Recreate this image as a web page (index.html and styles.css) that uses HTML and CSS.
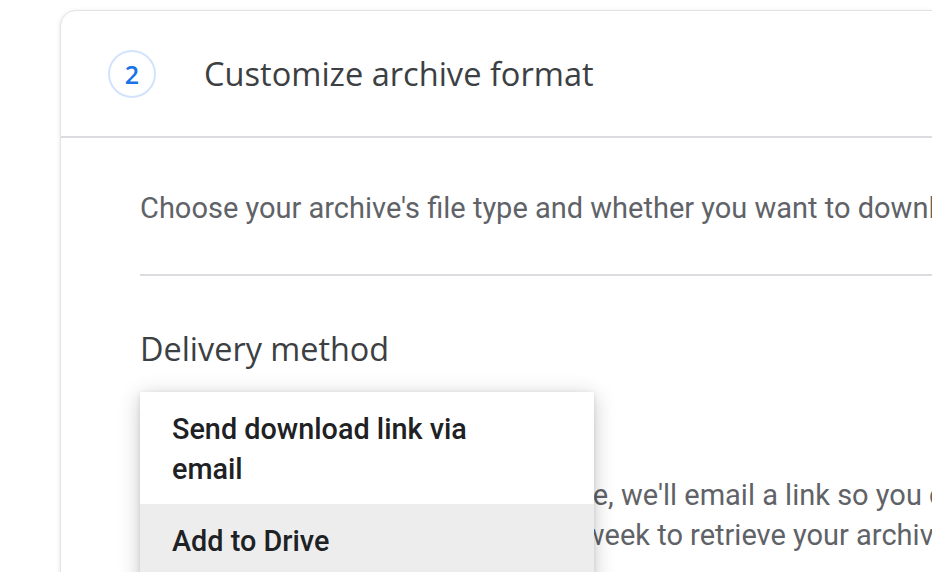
FILE: index.html
```html
<!DOCTYPE html>
<html lang="en">
<head>
<meta charset="utf-8">
<title>Customize archive format</title>
<link rel="stylesheet" href="styles.css">
</head>
<body>
<div class="page">
  <section class="card">
    <header class="card-header">
      <span class="step">2</span>
      <h2 class="title">Customize archive format</h2>
    </header>
    <div class="card-body">
      <p class="desc">Choose your archive's file type and whether you want to download it or add it to a cloud storage service.</p>
      <hr class="divider">
      <h3 class="section-title">Delivery method</h3>
      <div class="select-area">
        <div class="select-placeholder"></div>
        <p class="help">When the export archive is complete, we'll email a link so you can download it. You'll then have a full week to retrieve your archive.</p>
        <ul class="menu">
          <li class="menu-item first">Send download link via<br>email</li>
          <li class="menu-item active">Add to Drive</li>
        </ul>
      </div>
    </div>
  </section>
</div>
</body>
</html>
```

FILE: styles.css
```css
html, body {
  margin: 0;
  padding: 0;
  background: #ffffff;
  overflow: hidden;
}
.page {
  width: 932px;
  height: 572px;
  overflow: hidden;
  padding: 10px 0 0 60px;
  box-sizing: border-box;
}
.card {
  width: 1100px;
  min-height: 700px;
  border: 1px solid #e3e3e3;
  border-radius: 16px;
  box-shadow: 0 1px 4px rgba(60, 64, 67, 0.15);
  background: #fff;
}
.card-header {
  display: flex;
  align-items: center;
  height: 125px;
  padding-left: 47px;
  border-bottom: 2px solid #dadce0;
}
.step {
  width: 44px;
  height: 44px;
  border: 2px solid #d2e3fc;
  border-radius: 50%;
  display: flex;
  align-items: center;
  justify-content: center;
  font-family: "Open Sans", Roboto, sans-serif;
  font-size: 25px;
  font-weight: 600;
  color: #1a73e8;
}
.title {
  margin: 0 0 0 48px;
  font-family: "Open Sans", Roboto, sans-serif;
  font-weight: 500;
  font-size: 32.6px;
  color: #3c4043;
  letter-spacing: 0;
}
.card-body {
  padding-left: 79px;
}
.desc {
  margin: 0;
  padding-top: 52px;
  font-family: Roboto, "Liberation Sans", sans-serif;
  font-size: 29px;
  line-height: 36px;
  color: #5f6368;
  white-space: nowrap;
}
.divider {
  margin: 48px 0 0 0;
  border: 0;
  border-top: 2px solid #dadce0;
}
.section-title {
  margin: 0;
  padding-top: 52px;
  font-family: "Open Sans", Roboto, sans-serif;
  font-weight: 500;
  font-size: 32.4px;
  line-height: 40px;
  color: #3c4043;
}
.select-area {
  position: relative;
  margin-top: 24px;
}
.select-placeholder {
  height: 83px;
}
.help {
  margin: 0;
  width: 880px;
  font-family: Roboto, "Liberation Sans", sans-serif;
  font-size: 29px;
  line-height: 40px;
  color: #5f6368;
}
.menu {
  position: absolute;
  left: 0;
  top: 0;
  width: 454px;
  margin: 0;
  padding: 0;
  list-style: none;
  background: #fff;
  box-shadow: 0 4px 20px rgba(0, 0, 0, 0.22), 0 1px 4px rgba(0, 0, 0, 0.1);
}
.menu-item {
  padding: 17px 32px 15px;
  font-family: Roboto, "Liberation Sans", sans-serif;
  font-size: 28.8px;
  font-weight: 500;
  line-height: 40px;
  color: #202124;
}
.menu-item.active {
  background: #ededed;
  padding-bottom: 60px;
}
```
